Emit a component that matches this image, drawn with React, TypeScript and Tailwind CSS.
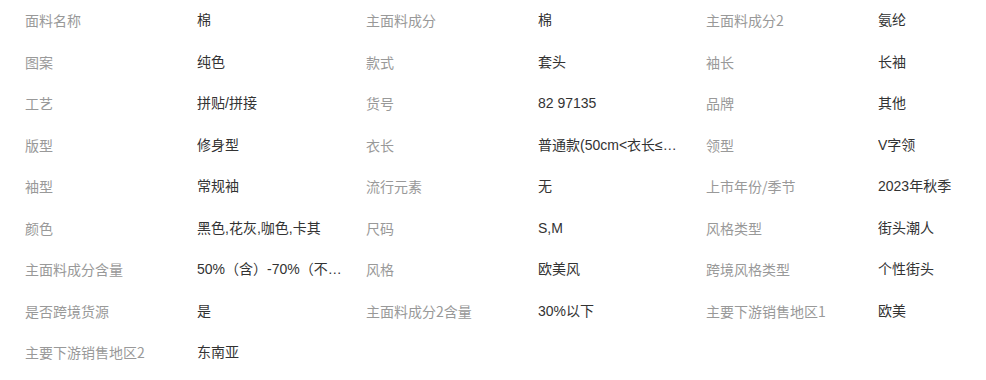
const attrs: [string, string][] = [
  ['面料名称', '棉'],
  ['主面料成分', '棉'],
  ['主面料成分2', '氨纶'],
  ['图案', '纯色'],
  ['款式', '套头'],
  ['袖长', '长袖'],
  ['工艺', '拼贴/拼接'],
  ['货号', '82 97135'],
  ['品牌', '其他'],
  ['版型', '修身型'],
  ['衣长', '普通款(50cm<衣长≤65cm)'],
  ['领型', 'V字领'],
  ['袖型', '常规袖'],
  ['流行元素', '无'],
  ['上市年份/季节', '2023年秋季'],
  ['颜色', '黑色,花灰,咖色,卡其'],
  ['尺码', 'S,M'],
  ['风格类型', '街头潮人'],
  ['主面料成分含量', '50%（含）-70%（不含）'],
  ['风格', '欧美风'],
  ['跨境风格类型', '个性街头'],
  ['是否跨境货源', '是'],
  ['主面料成分2含量', '30%以下'],
  ['主要下游销售地区1', '欧美'],
  ['主要下游销售地区2', '东南亚'],
];

export default function App() {
  return (
    <div className="w-[986px] h-[380px] bg-white overflow-hidden font-['Noto_Sans_CJK_SC',sans-serif] text-[14px]">
      <div className="grid grid-cols-[341px_340px_305px] pl-[25px]">
        {attrs.map(([label, value]) => (
          <div key={label} className="flex items-center h-[41.5px]">
            <span className="w-[172px] shrink-0 text-[#999] whitespace-nowrap">{label}</span>
            <span className="w-[146px] shrink-0 overflow-hidden text-ellipsis whitespace-nowrap text-[#333] font-['Liberation_Sans','Noto_Sans_CJK_SC',sans-serif]">
              {value}
            </span>
          </div>
        ))}
      </div>
    </div>
  );
}
